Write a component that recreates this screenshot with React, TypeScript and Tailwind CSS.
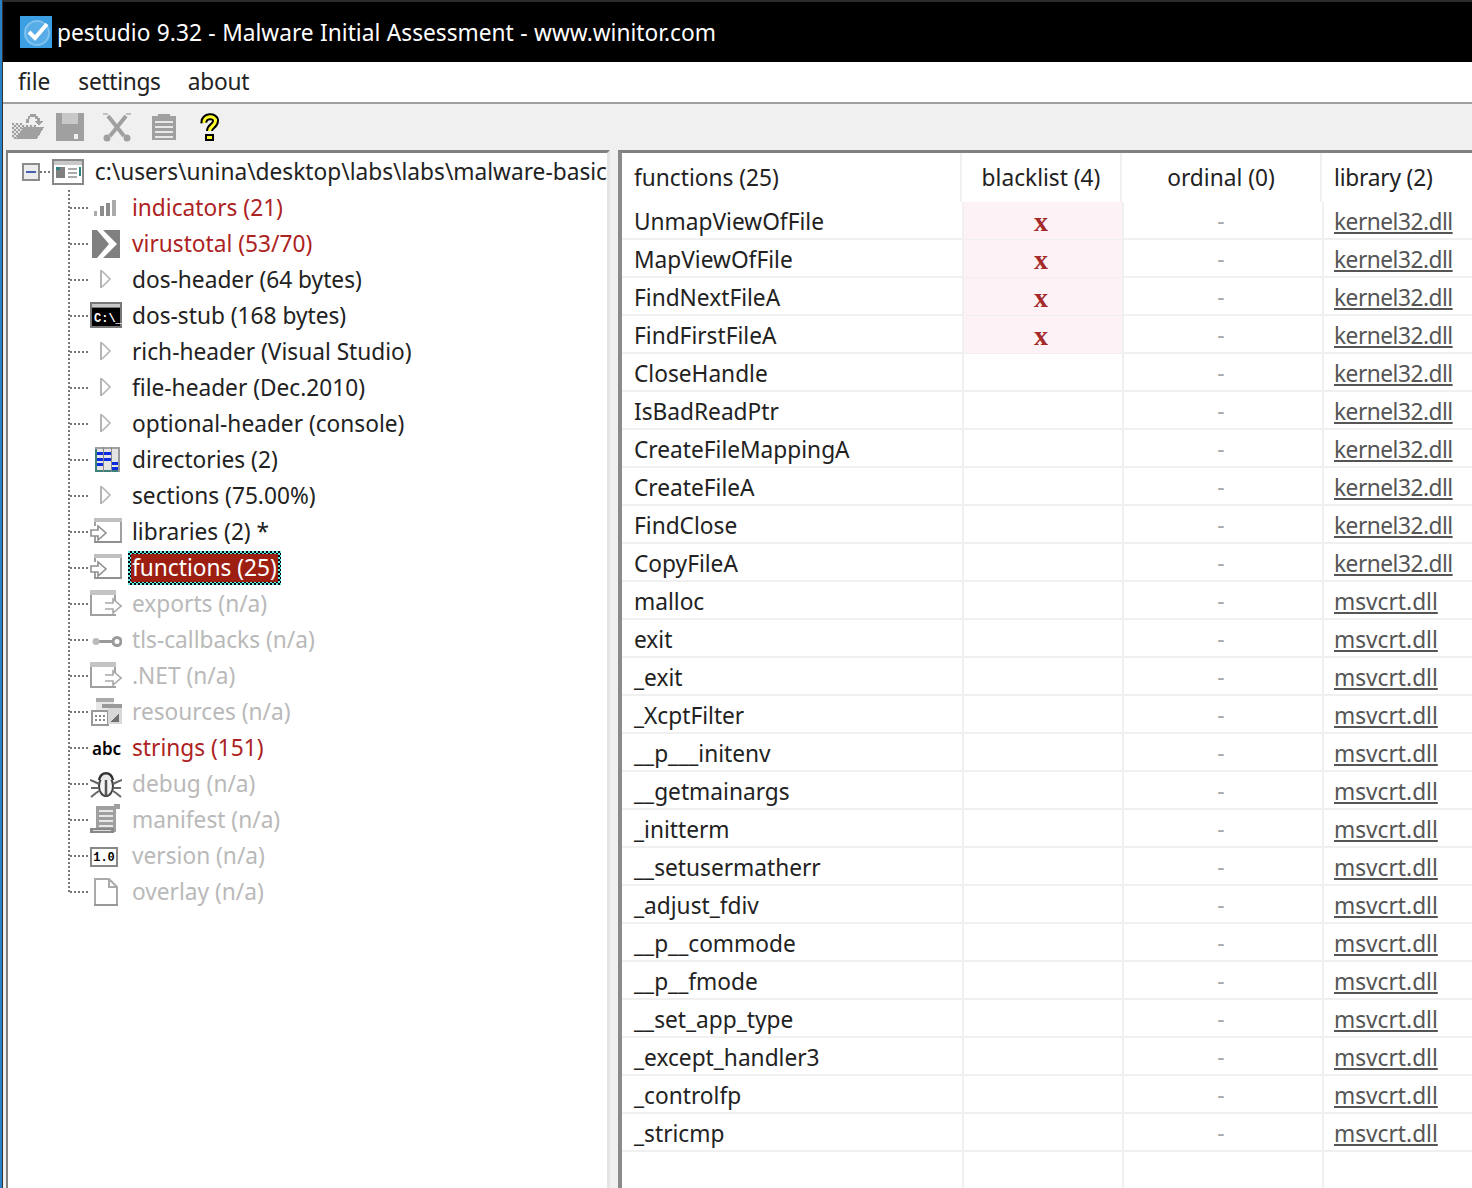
import React from 'react';

const dots = "bg-[repeating-linear-gradient(to_bottom,#777_0_2px,transparent_2px_4px)]";
const dotsX = "bg-[repeating-linear-gradient(to_right,#777_0_2px,transparent_2px_4px)]";

function Svg({ w = 32, h = 32, className, children }: { w?: number; h?: number; className?: string; children: React.ReactNode }) {
  return (
    <svg width={w} height={h} viewBox={`0 0 ${w} ${h}`} shapeRendering="crispEdges" className={className}>
      {children}
    </svg>
  );
}

function AppLogo() {
  return (
    <svg width="32" height="32" viewBox="0 0 32 32" className="shrink-0">
      <rect width="32" height="32" fill="#3d9fe3" />
      <circle cx="17" cy="17" r="12" fill="#58ade8" stroke="#7fc2ee" strokeWidth="2" />
      <path d="M9 16l6 6L27 8" fill="none" stroke="#fff" strokeWidth="4" />
    </svg>
  );
}

function FolderOpen() {
  return (
    <Svg w={32} h={28}>
      <defs>
        <pattern id="chk" width="4" height="4" patternUnits="userSpaceOnUse">
          <rect width="4" height="4" fill="#a0a0a0" />
          <rect width="2" height="2" fill="#e4e4e4" />
          <rect x="2" y="2" width="2" height="2" fill="#e4e4e4" />
        </pattern>
      </defs>
      <path d="M0 10h10v2h14v14H0z" fill="url(#chk)" />
      <path d="M4 26l7-12h21l-7 12z" fill="#a0a0a0" />
      <path d="M14 10V6h2V3h2V1h6v2h2v2h2v3h3l-4 5-4-5h2V6h-2V4h-5v2h-1v4z" fill="#a0a0a0" />
    </Svg>
  );
}

function Save() {
  return (
    <Svg w={28} h={28}>
      <path d="M0 0h28v28H0z" fill="#a0a0a0" />
      <rect x="6" y="0" width="16" height="11" fill="#c8c8c8" />
      <rect x="18" y="21" width="4" height="5" fill="#f0f0f0" />
    </Svg>
  );
}

function Cut() {
  return (
    <svg width="30" height="30" viewBox="0 0 30 30">
      <path d="M6 4l16 20M24 4L8 24" fill="none" stroke="#a0a0a0" strokeWidth="4" />
      <path d="M1 2l5 0M29 2l-5 0" fill="none" stroke="#c0c0c0" strokeWidth="2" />
      <circle cx="5" cy="26" r="3.5" fill="#a0a0a0" />
      <circle cx="25" cy="26" r="3.5" fill="#a0a0a0" />
    </svg>
  );
}

function Clipboard() {
  return (
    <Svg w={24} h={26}>
      <rect x="0" y="2" width="24" height="24" fill="#a0a0a0" />
      <rect x="6" y="0" width="12" height="4" fill="#a0a0a0" />
      <rect x="3" y="7" width="18" height="2" fill="#e8e8e8" />
      <rect x="3" y="12" width="18" height="2" fill="#e8e8e8" />
      <rect x="3" y="17" width="18" height="2" fill="#e8e8e8" />
      <rect x="3" y="22" width="18" height="2" fill="#e8e8e8" />
    </Svg>
  );
}

function Help() {
  return (
    <svg width="22" height="28" viewBox="0 0 22 28">
      <path d="M5 10C4 2 17 2 16.500 8c0 5-6 5-6 10" fill="none" stroke="#000" strokeWidth="7" />
      <path d="M5 10C4 2 17 2 16.500 8c0 5-6 5-6 10" fill="none" stroke="#ffff30" strokeWidth="3" />
      <rect x="6" y="21" width="9" height="7" fill="#000" />
      <rect x="8" y="23" width="5" height="3" fill="#ffff30" />
    </svg>
  );
}

function RootIcon() {
  return (
    <Svg w={32} h={26}>
      <rect x="1" y="1" width="30" height="24" fill="#fff" stroke="#888" strokeWidth="2" />
      <rect x="2" y="2" width="28" height="4" fill="#c8c8c8" />
      <rect x="4" y="8" width="9" height="11" fill="#808080" />
      <rect x="4" y="8" width="4" height="3" fill="#2f8080" />
      <rect x="16" y="9" width="9" height="2" fill="#aaa" />
      <rect x="16" y="13" width="9" height="2" fill="#aaa" />
      <rect x="16" y="17" width="9" height="2" fill="#aaa" />
      <rect x="27" y="8" width="2" height="9" fill="#2f8080" />
    </Svg>
  );
}

function TreeIcon({ name }: { name: string }) {
  switch (name) {
    case 'bars':
      return (
        <Svg>
          <rect x="4" y="19" width="3" height="5" fill="#aaa" />
          <rect x="10" y="14" width="4" height="10" fill="#8c8c8c" />
          <rect x="16" y="11" width="4" height="13" fill="#8c8c8c" />
          <rect x="22" y="8" width="4" height="16" fill="#aaa" />
        </Svg>
      );
    case 'vt':
      return (
        <svg width="32" height="32" viewBox="0 0 32 32">
          <rect x="2" y="2" width="28" height="28" fill="#808080" />
          <path d="M7 2h6l14 14-14 14H7l12-14z" fill="#fff" />
        </svg>
      );
    case 'chevron':
      return (
        <Svg>
          <rect x="10" y="6" width="2" height="18" fill="#b4b4b4" />
          <path d="M12 7l8 8-8 8" fill="none" stroke="#b4b4b4" strokeWidth="1.6" shapeRendering="auto" />
        </Svg>
      );
    case 'cmd':
      return (
        <Svg>
          <rect x="0" y="2" width="32" height="26" fill="#777" />
          <rect x="2" y="4" width="28" height="3" fill="#c8c8c8" />
          <rect x="2" y="8" width="28" height="18" fill="#000" />
          <text x="4" y="22" fontFamily="'Liberation Mono',monospace" fontWeight="700" fontSize="12" fill="#fff" shapeRendering="auto">C:\_</text>
        </Svg>
      );
    case 'grid':
      return (
        <Svg>
          <rect x="5" y="3" width="25" height="25" fill="#e4e4e4" />
          <rect x="5" y="26" width="25" height="2" fill="#3c8078" />
          <rect x="5" y="3" width="2" height="25" fill="#3c8078" />
          <rect x="5" y="3" width="25" height="2" fill="#a0a0a0" />
          <rect x="28" y="3" width="2" height="25" fill="#999" />
          <rect x="13" y="3" width="1" height="25" fill="#888" />
          <rect x="21" y="3" width="1" height="25" fill="#888" />
          <rect x="7" y="8" width="6" height="3" fill="#0a2be0" />
          <rect x="14" y="8" width="7" height="3" fill="#0a2be0" />
          <rect x="7" y="14" width="6" height="3" fill="#0a2be0" />
          <rect x="14" y="14" width="7" height="3" fill="#0a2be0" />
          <rect x="7" y="19" width="6" height="3" fill="#0a2be0" />
          <rect x="22" y="18" width="6" height="3" fill="#0a2be0" />
          <rect x="22" y="23" width="6" height="3" fill="#0a2be0" />
        </Svg>
      );
    case 'import':
      return (
        <Svg>
          <rect x="4" y="2" width="28" height="4" fill="#c0c0c0" />
          <rect x="30" y="6" width="2" height="21" fill="#a0a0a0" />
          <rect x="4" y="25" width="28" height="2" fill="#909090" />
          <rect x="4" y="6" width="2" height="4" fill="#a0a0a0" />
          <rect x="4" y="20" width="2" height="5" fill="#a0a0a0" />
          <path d="M1 14h7v-4l8 7-8 7v-4H1z" fill="#fff" stroke="#909090" strokeWidth="1.6" shapeRendering="auto" />
        </Svg>
      );
    case 'export':
      return (
        <Svg>
          <rect x="0" y="2" width="26" height="5" fill="#c4c4c4" />
          <rect x="0" y="7" width="2" height="21" fill="#a0a0a0" />
          <rect x="0" y="26" width="26" height="2" fill="#a0a0a0" />
          <rect x="24" y="7" width="2" height="6" fill="#a0a0a0" />
          <path d="M15 15h8v-4l8 7-8 7v-4h-8" fill="#fff" stroke="#a8a8a8" strokeWidth="1.6" shapeRendering="auto" />
        </Svg>
      );
    case 'key':
      return (
        <svg width="32" height="32" viewBox="0 0 32 32">
          <circle cx="27" cy="17.500" r="4" fill="none" stroke="#999" strokeWidth="3" />
          <rect x="8" y="16" width="16" height="3" fill="#999" />
          <circle cx="6" cy="17.500" r="3.500" fill="#bbb" />
        </svg>
      );
    case 'res':
      return (
        <Svg>
          <rect x="6" y="2" width="18" height="4" fill="#aaa" />
          <rect x="6" y="6" width="18" height="10" fill="#e8e8e8" />
          <rect x="12" y="8" width="20" height="4" fill="#9a9a9a" />
          <rect x="2" y="15" width="16" height="14" fill="#fff" stroke="#999" strokeWidth="2" />
          <rect x="5" y="19" width="2" height="2" fill="#888" />
          <rect x="9" y="19" width="2" height="2" fill="#888" />
          <rect x="13" y="19" width="2" height="2" fill="#888" />
          <rect x="5" y="23" width="2" height="2" fill="#888" />
          <rect x="9" y="23" width="2" height="2" fill="#888" />
          <rect x="13" y="23" width="2" height="2" fill="#888" />
          <rect x="18" y="12" width="14" height="16" fill="#d8d8d8" />
          <path d="M20 26l9-9v9z" fill="#707070" />
        </Svg>
      );
    case 'abc':
      return (
        <span className="w-[32px] pl-[2px] font-semibold text-[17px] leading-none text-black">abc</span>
      );
    case 'bug':
      return (
        <svg width="32" height="32" viewBox="0 0 32 32">
          <ellipse cx="16" cy="18" rx="7" ry="10" fill="#f4f4f4" stroke="#444" strokeWidth="2" />
          <path d="M9 12c2-9 12-9 14 0" fill="#e8e8e8" stroke="#333" strokeWidth="2.500" />
          <path d="M16 12v16" stroke="#555" strokeWidth="2.500" />
          <path d="M0 12l5 2 4 2M32 12l-5 2-4 2M1 20h8M31 20h-8M1 29l5-4 3-2M31 29l-5-4-3-2" fill="none" stroke="#666" strokeWidth="2" />
        </svg>
      );
    case 'scroll':
      return (
        <Svg>
          <rect x="6" y="2" width="20" height="26" fill="#a0a0a0" />
          <rect x="24" y="0" width="6" height="5" fill="#a0a0a0" />
          <rect x="9" y="6" width="14" height="2" fill="#e8e8e8" />
          <rect x="9" y="11" width="14" height="2" fill="#e8e8e8" />
          <rect x="9" y="16" width="14" height="2" fill="#e8e8e8" />
          <rect x="9" y="21" width="14" height="2" fill="#e8e8e8" />
          <rect x="0" y="24" width="24" height="5" fill="#888" />
          <rect x="3" y="26" width="18" height="1" fill="#ddd" />
        </Svg>
      );
    case 'ver':
      return (
        <Svg>
          <rect x="1" y="8" width="26" height="18" fill="#fff" stroke="#888" strokeWidth="2" />
          <text x="14" y="21" textAnchor="middle" fontFamily="'Liberation Mono',monospace" fontWeight="700" fontSize="12" fill="#000" shapeRendering="auto">1.0</text>
        </Svg>
      );
    case 'page':
      return (
        <svg width="32" height="32" viewBox="0 0 32 32">
          <path d="M5 3h14l8 8v18H5z" fill="#fff" stroke="#aaa" strokeWidth="2" />
          <path d="M19 3v8h8" fill="none" stroke="#aaa" strokeWidth="2" />
          <rect x="4" y="28" width="24" height="2" fill="#999" />
        </svg>
      );
    default:
      return null;
  }
}

type Item = { label: string; tone: 'red' | 'dark' | 'off' | 'sel'; icon: string };

const tree: Item[] = [
  { label: 'indicators (21)', tone: 'red', icon: 'bars' },
  { label: 'virustotal (53/70)', tone: 'red', icon: 'vt' },
  { label: 'dos-header (64 bytes)', tone: 'dark', icon: 'chevron' },
  { label: 'dos-stub (168 bytes)', tone: 'dark', icon: 'cmd' },
  { label: 'rich-header (Visual Studio)', tone: 'dark', icon: 'chevron' },
  { label: 'file-header (Dec.2010)', tone: 'dark', icon: 'chevron' },
  { label: 'optional-header (console)', tone: 'dark', icon: 'chevron' },
  { label: 'directories (2)', tone: 'dark', icon: 'grid' },
  { label: 'sections (75.00%)', tone: 'dark', icon: 'chevron' },
  { label: 'libraries (2) *', tone: 'dark', icon: 'import' },
  { label: 'functions (25)', tone: 'sel', icon: 'import' },
  { label: 'exports (n/a)', tone: 'off', icon: 'export' },
  { label: 'tls-callbacks (n/a)', tone: 'off', icon: 'key' },
  { label: '.NET (n/a)', tone: 'off', icon: 'export' },
  { label: 'resources (n/a)', tone: 'off', icon: 'res' },
  { label: 'strings (151)', tone: 'red', icon: 'abc' },
  { label: 'debug (n/a)', tone: 'off', icon: 'bug' },
  { label: 'manifest (n/a)', tone: 'off', icon: 'scroll' },
  { label: 'version (n/a)', tone: 'off', icon: 'ver' },
  { label: 'overlay (n/a)', tone: 'off', icon: 'page' },
];

const kernel = ['UnmapViewOfFile', 'MapViewOfFile', 'FindNextFileA', 'FindFirstFileA', 'CloseHandle', 'IsBadReadPtr', 'CreateFileMappingA', 'CreateFileA', 'FindClose', 'CopyFileA'];
const msvcrt = ['malloc', 'exit', '_exit', '_XcptFilter', '__p___initenv', '__getmainargs', '_initterm', '__setusermatherr', '_adjust_fdiv', '__p__commode', '__p__fmode', '__set_app_type', '_except_handler3', '_controlfp', '_stricmp'];

const rows = [
  ...kernel.map((name, i) => ({ name, lib: 'kernel32.dll', flagged: i < 4 })),
  ...msvcrt.map((name) => ({ name, lib: 'msvcrt.dll', flagged: false })),
];

function TreeRow({ item, last }: { item: Item; last: boolean }) {
  return (
    <div className="h-[36px] flex ml-[60px]">
      <div className={`w-[2px] ${last ? 'h-[19px]' : 'h-full'} ${dots}`} />
      <div className={`w-[20px] h-[2px] self-center ${dotsX}`} />
      <div className="w-[32px] h-full flex items-center shrink-0">
        <TreeIcon name={item.icon} />
      </div>
      {item.tone === 'sel' ? (
        <div className="ml-[6px] self-center h-[34px] p-[3px] bg-[conic-gradient(#000_25%,#6ee_0_50%,#000_0_75%,#6ee_0)] bg-[length:4px_4px]">
          <div className="h-[28px] leading-[28px] px-[1px] bg-[#9c1f12] text-white">{item.label}</div>
        </div>
      ) : (
        <div className={`ml-[10px] leading-[36px] ${item.tone === 'red' ? 'text-[#ad2222]' : item.tone === 'off' ? 'text-[#b9b9b9]' : 'text-[#222]'}`}>
          {item.label}
        </div>
      )}
    </div>
  );
}

export default function App() {
  return (
    <div className="w-[1472px] h-[1188px] overflow-hidden flex bg-[#f0f0f0] font-['Noto_Sans','Open_Sans',sans-serif] text-[22.7px] text-[#222]">
      <div className="w-[2px] bg-[#2a80c8] shrink-0" />
      <div className="w-[1px] bg-[#333] shrink-0" />
      <div className="flex-1 min-w-0 flex flex-col">
        <div className="h-[62px] shrink-0 bg-black border-t-2 border-[#2b2b2b] text-white flex items-center gap-[5px] pl-[17px] [word-spacing:0.6px]">
          <AppLogo />
          <span className="pt-[2px]">pestudio 9.32 - Malware Initial Assessment - www.winitor.com</span>
        </div>
        <div className="h-[40px] shrink-0 bg-white flex items-center pl-[15px]">
          <span>file</span>
          <span className="ml-[28px] tracking-[-0.3px]">settings</span>
          <span className="ml-[27px] tracking-[-0.2px]">about</span>
        </div>
        <div className="h-[48px] shrink-0 border-t-2 border-[#a0a0a0] flex items-center pl-[9px]">
          <FolderOpen />
          <div className="ml-[12px]"><Save /></div>
          <div className="ml-[18px]"><Cut /></div>
          <div className="ml-[20px]"><Clipboard /></div>
          <div className="ml-[23px]"><Help /></div>
        </div>
        <div className="flex-1 min-h-0 flex pl-[3px]">
          <div className="w-[604px] shrink-0 bg-white border-l-2 border-t-[3px] border-r-[3px] border-l-[#808080] border-t-[#808080] border-r-[#e4e4e4] pt-[1px]">
            <div className="h-[36px] flex items-center pl-[14px]">
              <div className="w-[18px] h-[18px] border-2 border-[#8c8c8c] bg-[#ececec] flex items-center justify-center">
                <div className="w-[10px] h-[2px] bg-[#4a5fb0]" />
              </div>
              <div className={`w-[12px] h-[2px] ${dotsX}`} />
              <RootIcon />
              <div className="ml-[11px] whitespace-nowrap">c:\users\unina\desktop\labs\labs\malware-basic</div>
            </div>
            {tree.map((t, i) => (
              <TreeRow key={t.label} item={t} last={i === tree.length - 1} />
            ))}
          </div>
          <div className="ml-[8px] flex-1 min-w-0 flex flex-col bg-white border-l-4 border-t-[3px] border-l-[#8a8a8a] border-t-[#808080]">
            <div className="h-[49px] shrink-0 grid grid-cols-[340px_160px_200px_1fr]">
              <div className="border-r-2 border-[#f0f0f0] flex items-center pl-[12px] pt-[2px]">functions (25)</div>
              <div className="border-r-2 border-[#f0f0f0] flex items-center justify-center pt-[2px]">blacklist (4)</div>
              <div className="border-r-2 border-[#f0f0f0] flex items-center justify-center pt-[2px]">ordinal (0)</div>
              <div className="flex items-center pl-[12px] pt-[2px] tracking-[-0.2px]">library (2)</div>
            </div>
            {rows.map((r) => (
              <div key={r.name} className="h-[38px] shrink-0 grid grid-cols-[342px_160px_200px_1fr] border-b-2 border-[#f0f0f0]">
                <div className="border-r-2 border-[#f0f0f0] flex items-center pl-[12px] pt-[3px]">{r.name}</div>
                <div className={`border-r-2 border-[#f0f0f0] flex items-center justify-center ${r.flagged ? 'bg-[#fdf3f7]' : ''}`}>
                  {r.flagged && <span className="font-['Liberation_Serif',serif] font-bold text-[28px] leading-none text-[#a52a2a] pt-[2px] pr-[4px]">x</span>}
                </div>
                <div className="border-r-2 border-[#f0f0f0] flex items-center justify-center text-[#aaa] pr-[4px]">-</div>
                <div className={`flex items-center pl-[10px] pt-[3px] text-[#555] underline decoration-2 underline-offset-2 ${r.lib === 'kernel32.dll' ? 'tracking-[-0.5px]' : ''}`}>{r.lib}</div>
              </div>
            ))}
            <div className="flex-1 grid grid-cols-[342px_160px_200px_1fr]">
              <div className="border-r-2 border-[#f0f0f0]" />
              <div className="border-r-2 border-[#f0f0f0]" />
              <div className="border-r-2 border-[#f0f0f0]" />
            </div>
          </div>
        </div>
      </div>
    </div>
  );
}
